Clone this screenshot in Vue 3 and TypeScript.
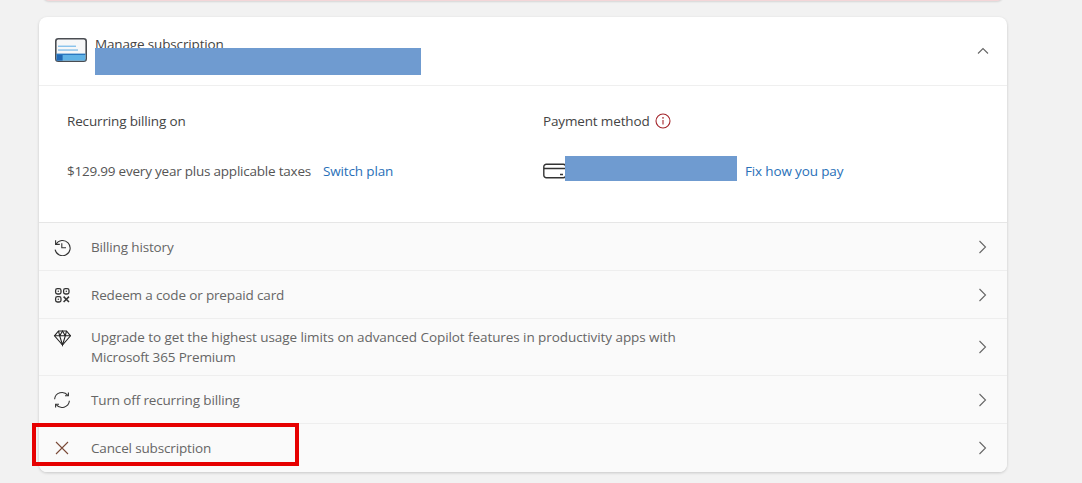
<script setup lang="ts">
type Row = {
  id: string
  label: string[]
}

const rows: Row[] = [
  { id: 'history', label: ['Billing history'] },
  { id: 'redeem', label: ['Redeem a code or prepaid card'] },
  {
    id: 'upgrade',
    label: [
      'Upgrade to get the highest usage limits on advanced Copilot features in productivity apps with',
      'Microsoft 365 Premium',
    ],
  },
  { id: 'recurring', label: ['Turn off recurring billing'] },
  { id: 'cancel', label: ['Cancel subscription'] },
]
</script>

<template>
  <div class="page">
    <div class="alert-card"></div>
    <section class="card">
      <header class="card-head">
        <svg class="product-icon" width="32" height="24" viewBox="0 0 32 24">
          <rect x="0.8" y="0.8" width="30.4" height="22.4" rx="2.5" fill="#f6f7f8" stroke="#4a4d52" stroke-width="1.6" />
          <rect x="1.6" y="16" width="28.8" height="6.6" fill="#5fb2e6" />
          <rect x="1.6" y="16" width="6" height="6.6" fill="#2168b4" />
          <rect x="1.6" y="15.6" width="28.8" height="1.4" fill="#2a78bf" />
          <rect x="3" y="7.6" width="18" height="1.3" fill="#7fbdea" />
          <rect x="3" y="11.4" width="20" height="1.3" fill="#7fbdea" />
        </svg>
        <div class="head-title">Manage subscription</div>
        <svg class="chev-up" width="12" height="8" viewBox="0 0 12 8">
          <path d="M1 6.5 L6 1.5 L11 6.5" fill="none" stroke="#666" stroke-width="1.1" />
        </svg>
        <div class="redact redact-title"></div>
      </header>

      <div class="details">
        <div class="col col-billing">
          <div class="col-label">Recurring billing on</div>
          <div class="col-value">
            <span class="price">$129.99 every year plus applicable taxes</span>
            <a class="link">Switch plan</a>
          </div>
        </div>
        <div class="col col-payment">
          <div class="col-label">
            Payment method
            <svg class="info" width="16" height="16" viewBox="0 0 16 16">
              <circle cx="8" cy="8" r="7" fill="none" stroke="#a4262c" stroke-width="1.1" />
              <circle cx="8" cy="4.9" r="0.8" fill="#a4262c" />
              <path d="M8 7v4.6" stroke="#a4262c" stroke-width="1.1" />
            </svg>
          </div>
          <div class="col-value pay-value">
            <svg class="pay-card" width="24" height="16" viewBox="0 0 24 16">
              <rect x="0.8" y="1.2" width="22" height="13.6" rx="2.5" fill="none" stroke="#333" stroke-width="1.4" />
              <path d="M1 5.5h22" stroke="#333" stroke-width="1.4" />
              <path d="M17 11.5h3" stroke="#333" stroke-width="1.4" />
            </svg>
            <div class="redact-pay"></div>
            <a class="link">Fix how you pay</a>
          </div>
        </div>
      </div>

      <ul class="rows">
        <li v-for="row in rows" :key="row.id" class="row" :class="'row-' + row.id">
          <span class="row-icon">
            <svg v-if="row.id === 'history'" width="18" height="18" viewBox="0 0 18 18" fill="none" stroke="#333" stroke-width="1.1">
              <path d="M2.6 2.2v4.2h4.2" />
              <path d="M3 6.2A7.6 7.6 0 1 1 2.1 11.6" />
              <path d="M8.8 5.2v4.6h4.2" />
            </svg>
            <svg v-else-if="row.id === 'redeem'" width="18" height="18" viewBox="0 0 18 18" fill="none" stroke="#333" stroke-width="1.3">
              <rect x="2.6" y="2.6" width="5.4" height="5.4" rx="1.8" />
              <rect x="10.6" y="2.6" width="5.4" height="5.4" rx="1.8" />
              <rect x="2.6" y="10.6" width="5.4" height="5.4" rx="1.8" />
              <circle cx="5.3" cy="5.3" r="0.7" fill="#333" stroke="none" />
              <circle cx="13.3" cy="5.3" r="0.7" fill="#333" stroke="none" />
              <circle cx="5.3" cy="13.3" r="0.7" fill="#333" stroke="none" />
              <path d="M10.6 10.6l5.4 5.4M16 10.6l-5.4 5.4" stroke-width="1.5" />
            </svg>
            <svg v-else-if="row.id === 'upgrade'" width="18" height="18" viewBox="0 0 18 18" fill="none" stroke="#222" stroke-width="1.1">
              <path d="M5.5 2h8l4 4.8L9.5 16l-8-9.2z" />
              <path d="M1.5 6.8h16M6.7 6.8L9.5 16l2.8-9.2M5.5 2l1.2 4.8L9.5 2l2.8 4.8L13.5 2" />
            </svg>
            <svg v-else-if="row.id === 'recurring'" width="18" height="18" viewBox="0 0 18 18" fill="none" stroke="#333" stroke-width="1.1">
              <path d="M1.6 8.2A7.4 7.4 0 0 1 14.8 4.4" />
              <path d="M15.4 1.4v3.4H12" />
              <path d="M16.4 9.8A7.4 7.4 0 0 1 3.2 13.6" />
              <path d="M2.6 16.6v-3.4H6" />
            </svg>
            <svg v-else width="18" height="18" viewBox="0 0 18 18" fill="none" stroke="#7a4a38" stroke-width="1.1">
              <path d="M3 3l12 12M15 3L3 15" />
            </svg>
          </span>
          <span class="row-label">
            <span v-for="line in row.label" :key="line" class="row-line">{{ line }}</span>
          </span>
          <svg class="chev-right" width="10" height="14" viewBox="0 0 10 14">
            <path d="M1.5 1l6 6-6 6" fill="none" stroke="#666" stroke-width="1.1" />
          </svg>
        </li>
      </ul>
    </section>
    <div class="callout"></div>
  </div>
</template>

<style scoped>
.page {
  position: relative;
  width: 1082px;
  height: 483px;
  overflow: hidden;
  background: #f2f2f2;
  font-family: "Open Sans", "Noto Sans", sans-serif;
  font-size: 13.5px;
  letter-spacing: -0.15px;
  color: #444;
}

.alert-card {
  width: 960px;
  height: 12px;
  margin: -11px 0 16px 43px;
  box-sizing: border-box;
  background: #fdf3f4;
  border: 1px solid #f3d6d8;
  border-radius: 6px;
  box-shadow: 0 1px 2px rgba(0, 0, 0, 0.12);
}

.card {
  width: 968px;
  height: 455px;
  margin-left: 39px;
  display: flex;
  flex-direction: column;
  background: #fff;
  border-radius: 8px;
  overflow: hidden;
  box-shadow: 0 1px 3px rgba(0, 0, 0, 0.18);
}

.card-head {
  position: relative;
  height: 69px;
  flex: none;
  box-sizing: border-box;
  border-bottom: 1px solid #efefef;
  display: flex;
  padding: 0 18px 0 16px;
}

.product-icon {
  margin-top: 21px;
}

.head-title {
  margin: 17px 0 0 8px;
  color: #444;
  flex: 1;
  line-height: 20px;
}

.chev-up {
  margin-top: 30px;
}

.redact {
  position: absolute;
  left: 56px;
  top: 31px;
  width: 326px;
  height: 27px;
  background: #6f9bd0;
}

.details {
  height: 137px;
  flex: none;
  box-sizing: border-box;
  display: flex;
  padding: 25px 0 0 28px;
  border-bottom: 1px solid #e6e6e6;
}

.col-billing {
  width: 476px;
}

.col-label {
  display: flex;
  align-items: center;
  gap: 5px;
  height: 20px;
  color: #444;
}

.col-value {
  display: flex;
  align-items: center;
  height: 30px;
  margin-top: 25px;
  gap: 12px;
  color: #555;
}

.price {
  letter-spacing: -0.22px;
}

.pay-value {
  gap: 0;
}

.redact-pay {
  align-self: flex-start;
  width: 172px;
  height: 25px;
  margin-left: -2px;
  margin-right: 8px;
  background: #6f9bd0;
}

.link {
  color: #2a70b8;
}

.rows {
  list-style: none;
  margin: 0;
  padding: 0;
  flex: 1;
  background: #fafafa;
}

.row {
  display: flex;
  align-items: center;
  height: 48px;
  box-sizing: border-box;
  padding: 0 19px 0 14px;
  border-bottom: 1px solid #eeeeee;
  color: #666;
}

.row:last-child {
  border-bottom: 0;
}

.row-upgrade {
  height: 57px;
}

.row-icon {
  width: 18px;
  height: 18px;
  flex: none;
  margin-right: 20px;
  display: flex;
}

.row-icon svg {
  display: block;
}

.row-upgrade .row-icon {
  align-self: flex-start;
  margin-top: 10px;
}

.row-label {
  flex: 1;
  display: flex;
  flex-direction: column;
  line-height: 20px;
}

.row-line {
  display: block;
}

.row-upgrade .row-line:first-child {
  letter-spacing: -0.075px;
}

.callout {
  position: absolute;
  left: 32px;
  top: 423px;
  width: 267px;
  height: 43px;
  box-sizing: border-box;
  border: 4px solid #e60000;
}
</style>

<style>
body {
  background: #f2f2f2;
}
</style>
